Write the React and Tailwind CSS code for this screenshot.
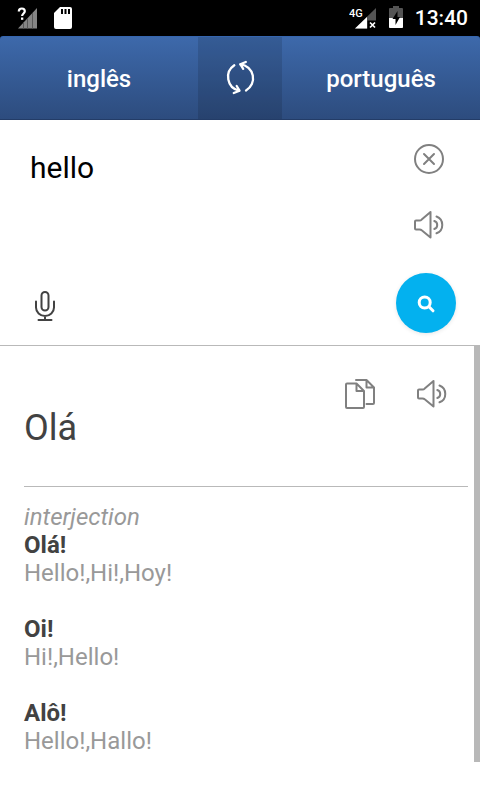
import { useState } from "react";

function SpeakerIcon() {
  return (
    <svg viewBox="0 0 32 32" className="size-8" fill="none" stroke="currentColor" strokeWidth="2" strokeLinejoin="round" strokeLinecap="round" aria-hidden="true">
      <path d="M2 12.500q0-1 1-1h3.500q1.300 0 2.200-.9L17.500 3v25.500l-8.800-7.200q-.9-.9-2.200-.9H3q-1 0-1-1z" />
      <path d="M21.300 12a4.200 4.200 0 0 1 0 8" />
      <path d="M23.500 7.500a9 9 0 0 1 0 16.800" />
    </svg>
  );
}

function StatusBar() {
  return (
    <div className="flex h-9 items-center bg-black pr-3 pl-4 text-white">
      <div className="flex flex-1 items-center gap-4">
        <svg viewBox="16 4 22 28" className="h-7 w-[22px]" aria-hidden="true">
          <path d="M18 28.500 37 8v20.500z" fill="#858585" />
          <path d="M23.500 22.500v6M27.500 18.200v10.300M32.500 13v15.500" stroke="#585858" strokeWidth="1" />
          <path d="M19 11.500c0-2 1.300-3 3-3s2.900 1 2.900 2.800c0 2-2.700 2.400-2.700 4.700v4" fill="none" stroke="#000" strokeWidth="4" />
          <path d="M18.800 11.500c0-2 1.400-3 3.100-3s2.900 1 2.900 2.800c0 2-2.700 2.400-2.700 4.700" fill="none" stroke="#fff" strokeWidth="2.200" />
          <path d="M21 17.500h2.300v2.300H21z" fill="#fff" />
        </svg>
        <svg viewBox="54 4 18 28" className="h-7 w-[18px]" aria-hidden="true">
          <path d="M60 7h10q2 0 2 2v18q0 2-2 2H56q-2 0-2-2V13z" fill="#fff" />
          <path d="M62 9v5M65.500 9v5M69 9v5" stroke="#000" strokeWidth="2" />
        </svg>
      </div>
      <div className="flex items-center gap-3">
        <svg viewBox="349 4 28 28" className="h-7 w-7" role="img" aria-label="4G">
          <path d="M355 28.500 376 8v20.500z" fill="#545454" />
          <path d="M355 28.500 367 17v11.500z" fill="#fff" />
          <path d="M367.500 20.500H377V30h-9.500z" fill="#000" />
          <path d="m370 22.500 5 5m0-5-5 5" stroke="#fff" strokeWidth="1.700" />
          <text x="349" y="17" fill="#fff" className="font-['Roboto'] text-[11px] font-medium">4G</text>
        </svg>
        <svg viewBox="389 4 14 28" className="h-7 w-[14px]" aria-hidden="true">
          <path d="M393 6h6v2h3q1 0 1 1v18q0 1-1 1h-12q-1 0-1-1V9q0-1 1-1h3z" fill="#545454" />
          <path d="M389 18h14v9q0 1-1 1h-12q-1 0-1-1z" fill="#fff" />
          <path d="m397.500 11-5 8h3v6l4.500-8h-2.500z" fill="#000" />
        </svg>
        <span className="text-[21px] leading-6 font-medium">13:40</span>
      </div>
    </div>
  );
}

function LanguageBar() {
  return (
    <div className="bg-black">
      <div className="flex h-[84px] overflow-hidden rounded-t-[3px] border-t border-b border-t-[#3565ae] border-b-[#233c67] bg-linear-to-b from-[#3d69ab] to-[#2d4c7e] text-2xl font-medium text-white">
        <button type="button" className="flex-1 pt-0.5">inglês</button>
        <button type="button" aria-label="Trocar idiomas" className="flex w-[84px] items-center justify-center bg-black/12">
          <svg viewBox="0 0 32 36" className="h-9 w-8" fill="none" stroke="currentColor" strokeWidth="2.300" strokeLinecap="round" strokeLinejoin="round" aria-hidden="true">
            <path d="M10.300 5.300A14 14 0 0 0 15 30.600" />
            <path d="M9.800 33 15.500 30.700 12.700 26" />
            <path d="M22 30.500A14 14 0 0 0 16.500 4.400" />
            <path d="M21.800 2 16.300 4.200 19.200 8.800" />
          </svg>
        </button>
        <button type="button" className="flex-1 pt-0.5">português</button>
      </div>
    </div>
  );
}

function SourcePanel() {
  const [text, setText] = useState("hello");
  return (
    <section className="flex gap-4 border-b border-[#b9b9b9] pt-[23px] pr-6 pb-3 pl-[30px]">
      <div className="flex flex-1 flex-col justify-between pb-[11px]">
        <textarea
          aria-label="Texto para traduzir"
          value={text}
          onChange={(event) => setText(event.target.value)}
          spellCheck={false}
          className="h-28 w-full resize-none overflow-hidden bg-transparent pt-[5px] text-[30px] leading-10 text-black outline-none"
        />
        <button type="button" aria-label="Falar" className="size-8 text-[#424242]">
          <svg viewBox="1 0 32 32" className="size-8" fill="none" stroke="currentColor" strokeWidth="2" strokeLinecap="round" aria-hidden="true">
            <rect x="12.500" y="2" width="7" height="18.500" rx="3.500" />
            <path d="M7 11.500v6a9 8.500 0 0 0 18 0v-6M16 26v4M9.500 30h13" />
          </svg>
        </button>
      </div>
      <div className="flex flex-col items-end text-[#808080]">
        <button type="button" aria-label="Limpar" className="mr-[11px] size-8" onClick={() => setText("")}>
          <svg viewBox="0 0 32 32" className="size-8" fill="none" stroke="currentColor" strokeWidth="2" strokeLinecap="round" aria-hidden="true">
            <circle cx="16" cy="16" r="14" />
            <path d="m11 11 10 10m0-10L11 21" />
          </svg>
        </button>
        <button type="button" aria-label="Ouvir o texto" className="mt-[34px] mr-[11px] size-8">
          <SpeakerIcon />
        </button>
        <button type="button" aria-label="Traduzir" className="mt-8 flex size-[60px] items-center justify-center rounded-full bg-[#03b1ef] text-white shadow-[0_1px_4px_rgba(0,0,0,0.1)]">
          <svg viewBox="0 0 20 20" className="size-5" fill="none" stroke="currentColor" strokeWidth="3" strokeLinecap="round" aria-hidden="true">
            <circle cx="8.700" cy="9.500" r="5.500" />
            <path d="m13 13.800 4 4" />
          </svg>
        </button>
      </div>
    </section>
  );
}

const entries = [
  { word: "Olá!", meanings: "Hello!,Hi!,Hoy!" },
  { word: "Oi!", meanings: "Hi!,Hello!" },
  { word: "Alô!", meanings: "Hello!,Hallo!" },
];

function ResultPanel() {
  return (
    <section className="flex">
      <div className="min-w-0 flex-1 pt-8 pr-1.5 pb-[7px] pl-6">
        <div className="flex justify-end gap-10 pr-5 text-[#808080]">
          <button type="button" aria-label="Copiar" className="size-8">
            <svg viewBox="0 0 32 32" className="size-8" fill="none" stroke="currentColor" strokeWidth="2" strokeLinecap="round" strokeLinejoin="round" aria-hidden="true">
              <path d="M12.500 5.500H3q-1 0-1 1V29q0 1 1 1h16q1 0 1-1V13zv7.500H20" />
              <path d="M12 2H22.500l7.500 7.500V25q0 1-1 1h-6.500M22.500 2v7.500H30" />
            </svg>
          </button>
          <button type="button" aria-label="Ouvir a tradução" className="size-8">
            <SpeakerIcon />
          </button>
        </div>
        <h1 className="border-b border-[#b9b9b9] pb-10 text-4xl leading-9 text-[#424242]">Olá</h1>
        <p className="mt-4 text-2xl leading-7 text-[#999] italic">interjection</p>
        <dl className="flex flex-col gap-7 text-2xl leading-7">
          {entries.map((entry) => (
            <div key={entry.word}>
              <dt className="font-bold text-[#424242]">{entry.word}</dt>
              <dd className="text-[#999]">{entry.meanings}</dd>
            </div>
          ))}
        </dl>
      </div>
      <div className="w-1.5 bg-[#b8b8b8]" aria-hidden="true" />
    </section>
  );
}

export default function App() {
  return (
    <main className="min-h-screen bg-white font-['Roboto',sans-serif]">
      <StatusBar />
      <LanguageBar />
      <SourcePanel />
      <ResultPanel />
    </main>
  );
}
